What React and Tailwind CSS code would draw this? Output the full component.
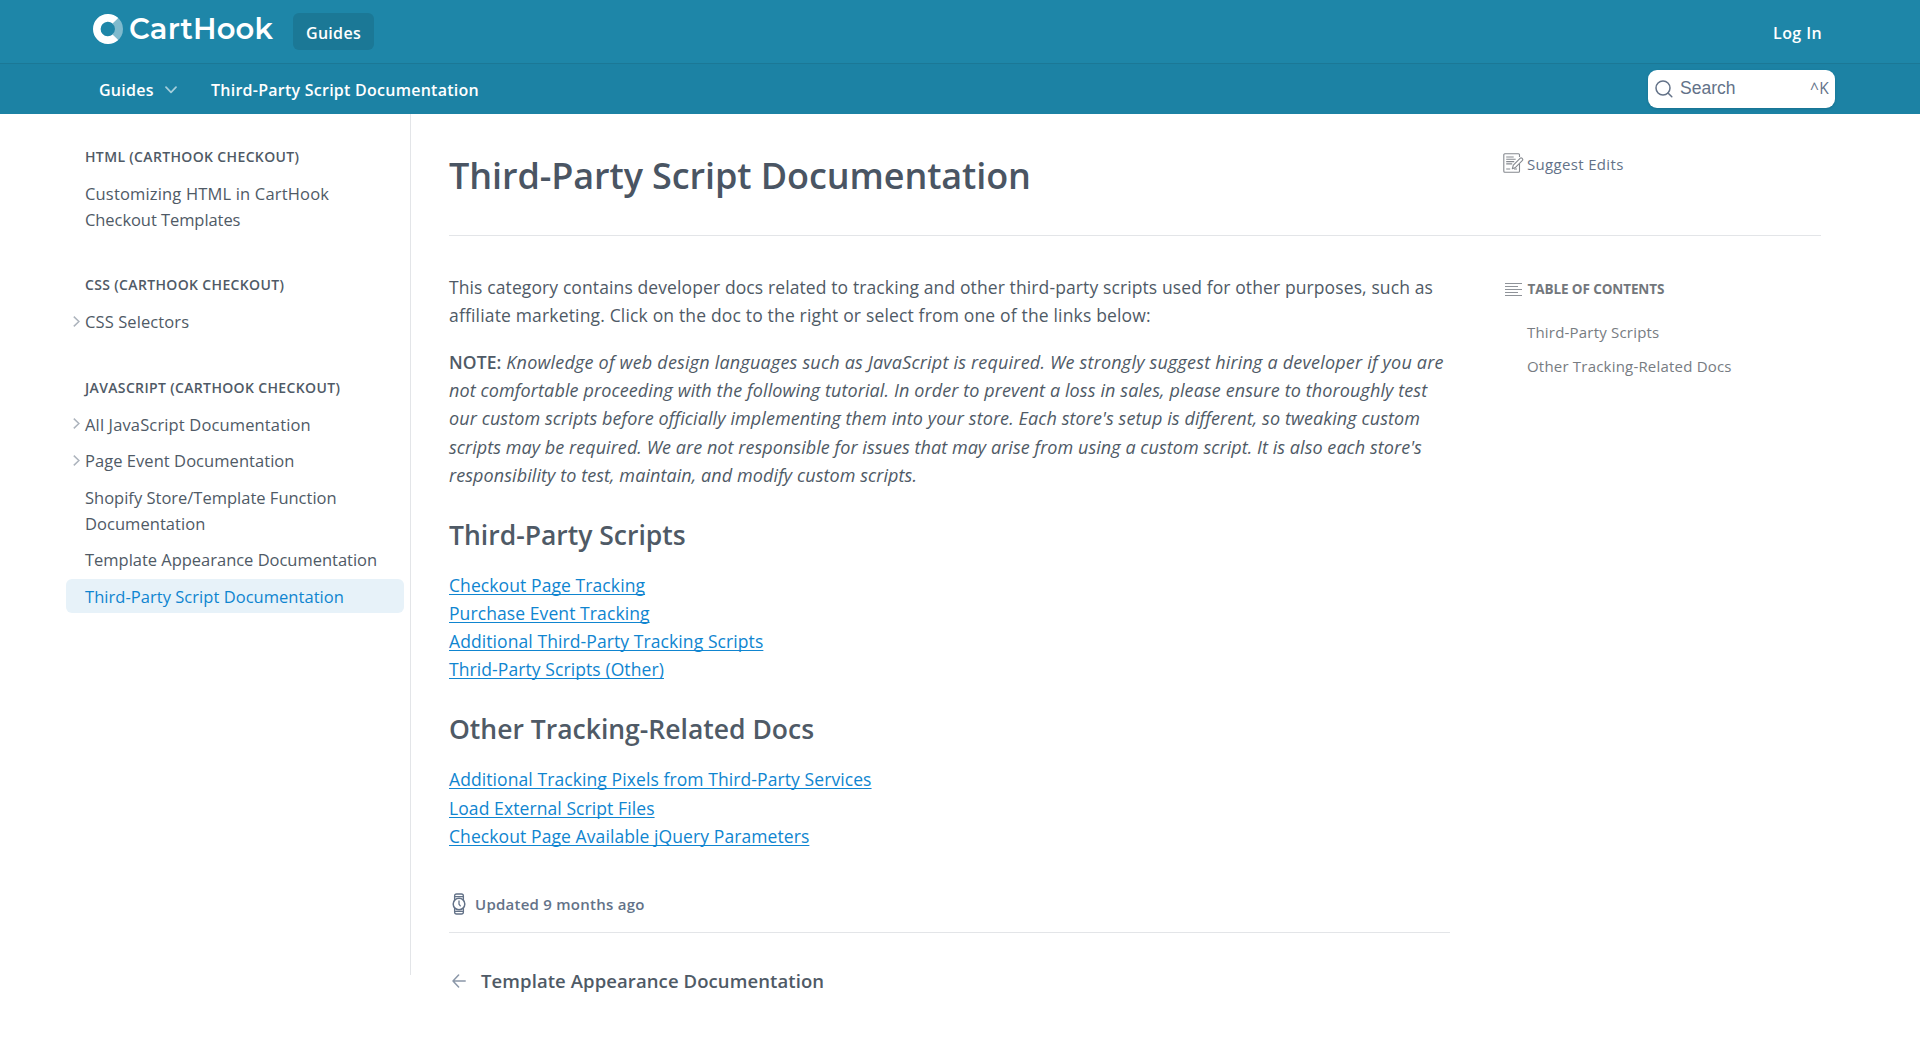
import React from "react";

const sidebar = [
  {
    title: "HTML (CARTHOOK CHECKOUT)",
    items: [{ lines: [["Customizing HTML in CartHook", "tracking-[0.17px]"], ["Checkout Templates", "tracking-[-0.07px]"]] }],
  },
  {
    title: "CSS (CARTHOOK CHECKOUT)",
    items: [{ arrow: true, lines: [["CSS Selectors", "tracking-[0.1px]"]] }],
  },
  {
    title: "JAVASCRIPT (CARTHOOK CHECKOUT)",
    items: [
      { arrow: true, lines: [["All JavaScript Documentation", "tracking-[0.14px]"]] },
      { arrow: true, lines: [["Page Event Documentation", "tracking-[0.05px]"]] },
      { lines: [["Shopify Store/Template Function", "tracking-[0px]"], ["Documentation", "tracking-[0.05px]"]] },
      { lines: [["Template Appearance Documentation", "tracking-[-0.02px]"]] },
      { active: true, lines: [["Third-Party Script Documentation", "tracking-[0.04px]"]] },
    ],
  },
];

function Line({ className = "", children }) {
  return <span className={`block whitespace-nowrap ${className}`}>{children}</span>;
}

function Logo() {
  return (
    <div className="flex items-center mt-[14px] h-[30px]">
      <svg width="30" height="30" viewBox="0 0 30 30" className="shrink-0" fill="none">
        <path d="M21.6 6.2A11 11 0 0 1 21.6 23.8" stroke="#7fbacd" strokeWidth="8" />
        <path d="M25.2 4 A15 15 0 1 0 25.2 26 L19.6 20.6 A7.3 7.3 0 1 1 19.6 9.4 Z" fill="#fff" />
      </svg>
      <span className="ml-[6px] w-[145px] whitespace-nowrap font-['Montserrat',sans-serif] text-[29px] leading-[30px] font-semibold tracking-[0.2px] text-white">
        CartHook
      </span>
    </div>
  );
}

function Header() {
  return (
    <header className="h-[114px] bg-[#1e86a8] text-white text-[16px] font-semibold leading-[22px]">
      <div className="h-[64px] border-b border-[#1b7896] pl-[93px] pr-[98px] flex items-start">
        <Logo />
        <a className="ml-[19px] mt-[13px] h-[37px] w-[81px] rounded-md bg-[#1b7896] flex items-center justify-center pt-[2px] tracking-[0.3px]">
          Guides
        </a>
        <a className="ml-auto mt-[22px] tracking-[0.4px]">Log In</a>
      </div>
      <div className="h-[50px] bg-[#1c82a4] pl-[99px] pr-[85px] flex items-start">
        <div className="mt-[15px] flex items-center">
          <span className="w-[66px] tracking-[0.25px]">Guides</span>
          <svg width="12" height="8" viewBox="0 0 12 8" fill="none" stroke="#a5cedb" strokeWidth="1.7" strokeLinecap="round" strokeLinejoin="round">
            <path d="M1 1.2 6 6.4 11 1.2" />
          </svg>
          <span className="ml-[34px] tracking-[0.25px]">Third-Party Script Documentation</span>
        </div>
        <div className="ml-auto mt-[6px] h-[38px] w-[187px] rounded-[9px] bg-white pl-[7px] pr-[6px] flex items-center font-['Liberation_Sans',Arial,sans-serif] font-normal text-[#637288] shadow-sm">
          <svg width="18" height="18" viewBox="0 0 18 18" fill="none" stroke="#637288" strokeWidth="1.5" strokeLinecap="round">
            <circle cx="8" cy="8" r="7" />
            <path d="m13 13 3.8 3.8" />
          </svg>
          <span className="ml-[7px] -mt-[2px] text-[17.5px]">Search</span>
          <span className="ml-auto -mt-[2px] font-['Open_Sans',sans-serif] text-[15.5px] tracking-[0.3px]">^K</span>
        </div>
      </div>
    </header>
  );
}

function Sidebar() {
  return (
    <nav className="w-[345px] h-[861px] shrink-0 border-r border-[#e3e5e8] pr-[6px] pt-[32.6px] flex flex-col gap-[39px]">
      {sidebar.map((s) => (
        <section key={s.title}>
          <h3 className="pl-[19px] text-[14px] leading-[20px] font-semibold tracking-[0.35px] text-[#4f5a66] mb-[9.5px]">{s.title}</h3>
          <div className="flex flex-col gap-[2.5px]">
            {s.items.map((it) => (
              <a
                key={it.lines[0][0]}
                className={`flex rounded-md pt-[4.8px] pb-[3.2px] text-[16.5px] leading-[26px] ${it.active ? "bg-[#e7f2f9] text-[#0f85d0]" : "text-[#4f5a66]"}`}
              >
                <span className="w-[19px] shrink-0 pl-[7px] pt-[6.2px]">
                  {it.arrow && (
                    <svg width="7" height="11" viewBox="0 0 7 11" fill="none" stroke="#adb4bd" strokeWidth="1.5">
                      <path d="M.8.6 5.9 5.5.8 10.4" />
                    </svg>
                  )}
                </span>
                <span>
                  {it.lines.map(([t, c]) => (
                    <Line key={t} className={c}>{t}</Line>
                  ))}
                </span>
              </a>
            ))}
          </div>
        </section>
      ))}
    </nav>
  );
}

function Links({ items }) {
  return (
    <p className="text-[#0f85d0]">
      {items.map((t) => (
        <Line key={t}>
          <a className="underline decoration-1 underline-offset-[2px] [text-decoration-skip-ink:none] tracking-[0.09px]">{t}</a>
        </Line>
      ))}
    </p>
  );
}

function Article() {
  return (
    <article className="w-[1001px] shrink-0 text-[17.5px] leading-[28.2px] text-[#4f5a66]">
      <p className="pt-[37px]">
        <Line className="tracking-[0.11px]">
          This category contains developer docs related to tracking and other third-party scripts used for other purposes, such as
        </Line>
        <Line className="tracking-[0.165px]">affiliate marketing. Click on the doc to the right or select from one of the links below:</Line>
      </p>
      <p className="mt-[18.6px] italic text-[18px]">
        <Line className="tracking-[0.195px]">
          <strong className="not-italic font-semibold text-[17.5px] tracking-[0.1px]">NOTE:</strong> Knowledge of web design languages such as
          JavaScript is required. We strongly suggest hiring a developer if you are
        </Line>
        <Line className="tracking-[0.11px]">
          not comfortable proceeding with the following tutorial. In order to prevent a loss in sales, please ensure to thoroughly test
        </Line>
        <Line className="tracking-[0.09px]">
          our custom scripts before officially implementing them into your store. Each store's setup is different, so tweaking custom
        </Line>
        <Line className="tracking-[0.055px]">
          scripts may be required. We are not responsible for issues that may arise from using a custom script. It is also each store's
        </Line>
        <Line className="tracking-[0.08px]">responsibility to test, maintain, and modify custom scripts.</Line>
      </p>
      <h2 className="mt-[28px] mb-[17.5px] text-[26.5px] leading-[36px] font-semibold">Third-Party Scripts</h2>
      <Links
        items={["Checkout Page Tracking", "Purchase Event Tracking", "Additional Third-Party Tracking Scripts", "Thrid-Party Scripts (Other)"]}
      />
      <h2 className="mt-[28px] mb-[18px] text-[26.5px] leading-[36px] font-semibold">Other Tracking-Related Docs</h2>
      <Links
        items={[
          "Additional Tracking Pixels from Third-Party Services",
          "Load External Script Files",
          "Checkout Page Available jQuery Parameters",
        ]}
      />
      <div className="mt-[43px] h-[40px] border-b border-[#e3e5e8] flex items-start text-[15px] leading-[22px] font-semibold tracking-[0.25px] text-[#637288]">
        <svg width="16" height="22" viewBox="0 0 16 22" className="ml-[2px] mr-[8px]" fill="none" stroke="#637288" strokeWidth="1.5" strokeLinecap="round" strokeLinejoin="round">
          <circle cx="8" cy="11" r="5.8" />
          <path d="M3.600 7V3q0-2 2-2h4.800q2 0 2 2v4M3.600 15v4q0 2 2 2h4.800q2 0 2-2v-4M4 3.600h8M4 18.400h8M8 8v3.200l1.300 1.600" strokeWidth="1.3" />
        </svg>
        Updated 9 months ago
      </div>
      <div className="mt-[34px] flex items-center text-[18.5px] leading-[28px] font-semibold tracking-[0.09px]">
        <svg width="14" height="14" viewBox="0 0 14 14" className="ml-[3px] mr-[15px]" fill="none" stroke="#8b97a8" strokeWidth="1.5" strokeLinecap="round" strokeLinejoin="round">
          <path d="M13.2 7H1M6.6 1 1 7l5.6 6" />
        </svg>
        Template Appearance Documentation
      </div>
    </article>
  );
}

function Toc() {
  return (
    <aside className="ml-[54.5px] pt-[42px] text-[15px] leading-[22px] text-[#777c82]">
      <div className="flex items-center text-[13.5px] font-bold leading-[22px] tracking-[-0.1px] text-[#73777c]">
        <svg width="17" height="13" viewBox="0 0 17 13" className="mr-[6px]" stroke="#8f9399" strokeWidth="1" shapeRendering="crispEdges">
          <path d="M0 .5h17M0 3.5h13M0 6.5h17M0 9.5h13M0 12.5h17" />
        </svg>
        TABLE OF CONTENTS
      </div>
      <div className="mt-[21px] ml-[22.5px] flex flex-col gap-[12px] tracking-[0.2px]">
        <a>Third-Party Scripts</a>
        <a>Other Tracking-Related Docs</a>
      </div>
    </aside>
  );
}

export default function App() {
  return (
    <div className="h-[1053px] overflow-hidden bg-white font-['Open_Sans','Noto_Sans',sans-serif]">
      <Header />
      <div className="pl-[66px] flex items-start">
        <Sidebar />
        <main className="ml-[38px] w-[1372px]">
          <div className="h-[122px] border-b border-[#e3e5e8] flex items-start">
            <h1 className="mt-[40px] w-[1054px] text-[36px] leading-[44px] font-semibold tracking-[-0.09px] text-[#4a5563]">
              Third-Party Script Documentation
            </h1>
            <a className="mt-[39px] flex items-center text-[15px] leading-[22px] tracking-[0.33px] text-[#637288]">
              <svg width="21" height="20" viewBox="0 0 21 20" className="mr-[3px] -mt-[2px]" fill="none" stroke="#85898f" strokeWidth="1.1" strokeLinejoin="round">
                <path d="M16.5 4V1.800a1 1 0 0 0-1-1H1.800a1 1 0 0 0-1 1v16.400a1 1 0 0 0 1 1h13.700a1 1 0 0 0 1-1V11M3.200 4h7.500M3.200 6.300h9.500M3.200 8.600h8M3.200 10.900h6M3.200 16h4M11 16h3" />
                <path d="m9.300 15.800 1-3.600 7-7q.8-.7 1.600 0l.6.6q.7.8 0 1.600l-7 7Z" fill="#fff" />
              </svg>
              Suggest Edits
            </a>
          </div>
          <div className="flex items-start">
            <Article />
            <Toc />
          </div>
        </main>
      </div>
    </div>
  );
}
